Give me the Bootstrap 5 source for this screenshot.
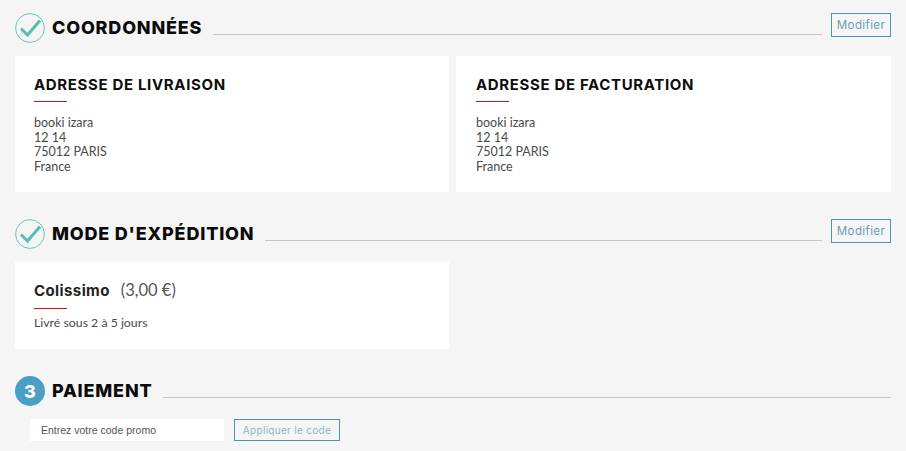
<!DOCTYPE html>
<html lang="fr">
<head>
<meta charset="utf-8">
<title>Commande</title>
<link href="https://cdn.jsdelivr.net/npm/bootstrap@5.3.0/dist/css/bootstrap.min.css" rel="stylesheet">
<style>
html,body{height:451px;overflow:hidden}
body{background:#f5f5f5;font-family:Lato,"Open Sans",sans-serif;color:#4a4a4a;font-size:12.5px}
.pagewrap{padding:13px 15px 0}
.stephead{height:30px;gap:7px}
.stepicon{width:30px;height:30px;flex:none;display:block}
.steptitle{font-family:Inter,"Liberation Sans",sans-serif;font-weight:800;font-size:18px;line-height:30px;color:#0b0b0b;margin:0;letter-spacing:.8px;white-space:nowrap}
.steprule{flex:1;height:1px;background:#c4c8ca;align-self:flex-end;margin:0 1px 8px 4px}
.steprule.fullrule{margin-right:0}
.editbtn{width:60px;height:24px;border:1px solid #4e93ac;border-radius:0;color:#6b9fb5;background:transparent;font-family:Inter,sans-serif;font-size:11.5px;letter-spacing:.4px;line-height:22px;padding:0;align-self:flex-start;margin-left:1px}
.addrgrid{gap:7px;margin-top:13px}
.addrbox{background:#fff;flex:1 1 0;padding:20px 19px 0 20px;height:136px}
.addrbox.firstbox{flex:0 0 434px;padding-left:19px}
.addrbox h3{font-family:Inter,sans-serif;font-weight:700;font-size:15px;line-height:18px;color:#0d0d0d;margin:0;letter-spacing:.65px}
.redbar{width:33px;height:1px;background:#d0121b;margin:7px 0 14px}
.addrtext{line-height:14.5px;color:#4a4a4a}
.shipbox{background:#fff;width:434px;height:87px;margin-top:13px;padding:16px 19px 0}
.shipname{font-family:Inter,sans-serif;font-weight:700;font-size:15px;line-height:20px;color:#222;letter-spacing:.4px}
.shipprice{font-size:16.5px;color:#555;margin-left:11px}
.shipbox .redbar{margin:5px 0 5px}
.shipnote{font-size:12.3px}
.sec2{margin-top:27px}
.sec3{margin-top:27px}
.promorow{margin:13px 0 0 15px;gap:10px}
.promoinput{width:194px;height:22px;background:#fff;border:0;border-radius:0;padding:0 11px;font-family:"Liberation Sans",sans-serif;font-size:10.5px;color:#555}
.promoinput::placeholder{color:#555;opacity:1}
.promobtn{width:106px;height:22px;border:1px solid #4e93ac;border-radius:0;background:transparent;color:#8fb6c8;font-family:Inter,sans-serif;font-size:10px;letter-spacing:.3px;padding:0;line-height:20px}
</style>
</head>
<body>
<div class="pagewrap">
  <div class="d-flex align-items-center stephead">
    <svg class="stepicon" viewBox="0 0 30 30"><circle cx="15" cy="15" r="14.4" fill="none" stroke="#6fc4ba" stroke-width="1"/><path d="M6 15.5l6.5 6.5L25 7.5" fill="none" stroke="#58bdb2" stroke-width="3"/></svg>
    <h2 class="steptitle">COORDONNÉES</h2>
    <div class="steprule"></div>
    <button class="btn editbtn" type="button">Modifier</button>
  </div>
  <div class="d-flex addrgrid">
    <div class="addrbox firstbox">
      <h3>ADRESSE DE LIVRAISON</h3>
      <div class="redbar"></div>
      <div class="addrtext">booki izara<br>12 14<br>75012 PARIS<br>France</div>
    </div>
    <div class="addrbox">
      <h3>ADRESSE DE FACTURATION</h3>
      <div class="redbar"></div>
      <div class="addrtext">booki izara<br>12 14<br>75012 PARIS<br>France</div>
    </div>
  </div>
  <div class="d-flex align-items-center stephead sec2">
    <svg class="stepicon" viewBox="0 0 30 30"><circle cx="15" cy="15" r="14.4" fill="none" stroke="#6fc4ba" stroke-width="1"/><path d="M6 15.5l6.5 6.5L25 7.5" fill="none" stroke="#58bdb2" stroke-width="3"/></svg>
    <h2 class="steptitle">MODE D'EXPÉDITION</h2>
    <div class="steprule"></div>
    <button class="btn editbtn" type="button">Modifier</button>
  </div>
  <div class="shipbox">
    <div><span class="shipname">Colissimo</span><span class="shipprice">(3,00 €)</span></div>
    <div class="redbar"></div>
    <div class="shipnote">Livré sous 2 à 5 jours</div>
  </div>
  <div class="d-flex align-items-center stephead sec3">
    <svg class="stepicon" viewBox="0 0 30 30"><circle cx="15" cy="15" r="15" fill="#4a9fc7"/><text x="15" y="21.5" text-anchor="middle" font-family="Inter,sans-serif" font-weight="800" font-size="18" fill="#fff">3</text></svg>
    <h2 class="steptitle">PAIEMENT</h2>
    <div class="steprule fullrule"></div>
  </div>
  <div class="d-flex promorow">
    <input class="form-control promoinput" type="text" placeholder="Entrez votre code promo">
    <button class="btn promobtn" type="button">Appliquer le code</button>
  </div>
</div>
<script src="https://cdn.jsdelivr.net/npm/bootstrap@5.3.0/dist/js/bootstrap.bundle.min.js"></script>
</body>
</html>
